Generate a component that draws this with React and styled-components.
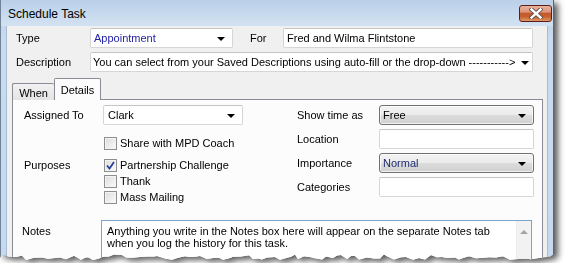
import React from 'react';
import styled, { createGlobalStyle } from 'styled-components';

const GlobalStyle = createGlobalStyle`
  html, body {
    margin: 0;
    padding: 0;
    background: #ffffff;
  }
  body {
    font-family: "Liberation Sans", Arial, sans-serif;
    font-size: 11px;
    color: #000;
  }
`;

// jagged bottom edge of the torn screenshot
const tornEdge = (() => {
  let seed = 7;
  const rnd = () => {
    seed = (seed * 16807) % 2147483647;
    return seed / 2147483647;
  };
  const pts = [];
  let x = 554;
  while (x > 0) {
    const y = 256 + rnd() * 4 + (rnd() > 0.8 ? -2 : 0);
    pts.push(`${x.toFixed(0)}px ${y.toFixed(1)}px`);
    x -= 3 + rnd() * 5;
  }
  pts.push(`0px 258px`);
  return `polygon(0 0, 554px 0, ${pts.join(', ')})`;
})();

const Shadow = styled.div`
  width: 554px;
  filter: drop-shadow(4px 3px 3px rgba(0, 0, 0, 0.65));
`;

const Window = styled.div`
  box-sizing: border-box;
  width: 554px;
  height: 263px;
  display: flex;
  flex-direction: column;
  padding: 0 5px;
  background: linear-gradient(#b9cfe8, #c9dbef 40px, #c7d9ee);
  border-left: 1px solid #6f8298;
  border-right: 1px solid #53667d;
  clip-path: ${tornEdge};
`;

const TitleBar = styled.div`
  flex: none;
  height: 26px;
  display: flex;
  align-items: flex-start;
  justify-content: space-between;
  font-size: 12px;
  background: linear-gradient(#bad0e9, #d3e2f2);
  margin: 0 -5px;
  padding: 0 0 0 7px;
`;

const Title = styled.span`
  padding-top: 7px;
`;

const CloseButton = styled.div`
  box-sizing: border-box;
  width: 33px;
  height: 17px;
  margin: 5px 1px 0 0;
  border: 1px solid #5e1c1c;
  border-radius: 3px;
  display: flex;
  align-items: center;
  justify-content: center;
  background: linear-gradient(
    #eab19a 0%,
    #dd957a 40%,
    #c4582e 50%,
    #c65f30 70%,
    #de9a66 100%
  );
`;

const Client = styled.div`
  flex: 1;
  min-height: 0;
  overflow: hidden;
  background: #f0f0f0;
  border-left: 1px solid #a9bcd2;
  border-right: 1px solid #a9bcd2;
  padding-top: 2px;
  display: flex;
  flex-direction: column;
`;

const TopRow = styled.div`
  flex: none;
  display: flex;
  align-items: center;
  height: 20px;
  padding-left: 9px;
  margin-bottom: ${(p) => p.gap || 0}px;
`;

const Label = styled.div`
  width: ${(p) => p.width}px;
  flex: none;
  padding-left: ${(p) => p.indent || 0}px;
  box-sizing: border-box;
`;

const Field = styled.div`
  box-sizing: border-box;
  width: ${(p) => p.width}px;
  height: 20px;
  flex: none;
  display: flex;
  align-items: center;
  justify-content: space-between;
  padding: 0 7px 0 ${(p) => p.pad || 3}px;
  background: #ffffff;
  border: 1px solid #d6d6d6;
  border-top-color: #c4c4c4;
  border-radius: 2px;
  color: ${(p) => p.color || '#000'};
  white-space: nowrap;
`;

const Combo = styled(Field)`
  border: 1px solid #707070;
  border-radius: 3px;
  background: linear-gradient(#f3f3f3 0%, #ebebeb 50%, #dddddd 51%, #cfcfcf 100%);
  box-shadow: inset 0 0 0 1px rgba(255, 255, 255, 0.7);
`;

const Arrow = styled.span`
  flex: none;
  width: 0;
  height: 0;
  margin-left: 6px;
  border-left: 4px solid transparent;
  border-right: 4px solid transparent;
  border-top: 4px solid #000;
  margin-top: 1px;
`;

const TabStrip = styled.div`
  flex: none;
  display: flex;
  align-items: flex-end;
  margin: 6px 0 0 5px;
  position: relative;
  z-index: 1;
  margin-bottom: -1px;
`;

const Tab = styled.div`
  box-sizing: border-box;
  width: ${(p) => (p.active ? 47 : 42)}px;
  height: ${(p) => (p.active ? 22 : 17)}px;
  display: flex;
  align-items: center;
  justify-content: center;
  padding-top: ${(p) => (p.active ? 0 : 2)}px;
  border: 1px solid #898c95;
  border-bottom: none;
  border-right: ${(p) => (p.active ? '1px solid #898c95' : 'none')};
  border-radius: 2px 2px 0 0;
  background: ${(p) =>
    p.active ? '#fcfcfc' : 'linear-gradient(#f2f2f2, #e4e4e4)'};
`;

const Panel = styled.div`
  flex: 1;
  min-height: 0;
  margin: 0 4px 0 5px;
  border: 1px solid #898c95;
  background: #fcfcfc;
  padding: 5px 8px 0 11px;
`;

const Columns = styled.div`
  display: flex;
  justify-content: space-between;
`;

const LeftCol = styled.div`
  width: 219px;
  display: flex;
  flex-direction: column;
`;

const RightCol = styled.div`
  width: 237px;
  display: grid;
  grid-template-columns: 82px 155px;
  grid-auto-rows: 20px;
  row-gap: 4px;
  align-items: center;
`;

const FormRow = styled.div`
  display: flex;
  align-items: ${(p) => p.align || 'center'};
  margin-top: ${(p) => p.top || 0}px;
`;

const CheckList = styled.div`
  display: flex;
  flex-direction: column;
`;

const CheckRow = styled.div`
  height: 16px;
  display: flex;
  align-items: center;
  gap: 3px;
  margin-left: 1px;
`;

const Box = styled.span`
  box-sizing: border-box;
  width: 13px;
  height: 13px;
  border: 1px solid #8e8f8f;
  background: linear-gradient(135deg, #dcdcdc, #fbfbfb);
  box-shadow: inset 0 0 0 1px #f4f4f4;
  display: flex;
  align-items: center;
  justify-content: center;
`;

const NotesRow = styled.div`
  display: flex;
  align-items: flex-start;
  margin-top: 15px;
  margin-left: -2px;
`;

const NotesLabel = styled.div`
  width: 79px;
  padding-top: 5px;
`;

const NotesBox = styled.div`
  box-sizing: border-box;
  width: 431px;
  height: 60px;
  display: flex;
  background: #ffffff;
  border: 1px solid #7da2ce;
`;

const NotesText = styled.div`
  flex: 1;
  padding: 4px 5px;
  line-height: 12px;
`;

const ScrollBar = styled.div`
  width: 15px;
  background: #f2f2f2;
  border-left: 1px solid #ececec;
  display: flex;
  justify-content: center;
  padding-top: 9px;
  box-sizing: border-box;
`;

const UpArrow = styled.span`
  width: 0;
  height: 0;
  border-left: 4px solid transparent;
  border-right: 4px solid transparent;
  border-bottom: 4px solid #a4a4a4;
`;

const CloseGlyph = () => (
  <svg width="14" height="11" viewBox="0 0 14 11">
    <path d="M2.5 1.5 L11.5 9.5 M11.5 1.5 L2.5 9.5" stroke="#5a4a44" strokeWidth="4.2" strokeLinecap="square" />
    <path d="M2.5 1.5 L11.5 9.5 M11.5 1.5 L2.5 9.5" stroke="#ffffff" strokeWidth="2.4" strokeLinecap="square" />
  </svg>
);

const Check = () => (
  <svg width="9" height="9" viewBox="0 0 9 9">
    <path d="M1 4.5 L3.5 7.5 L8 1" fill="none" stroke="#2b3f9a" strokeWidth="1.8" />
  </svg>
);

const CheckItem = ({ checked, children }) => (
  <CheckRow>
    <Box>{checked && <Check />}</Box>
    {children}
  </CheckRow>
);

export default function App() {
  return (
    <>
      <GlobalStyle />
      <Shadow>
        <Window>
          <TitleBar>
            <Title>Schedule Task</Title>
            <CloseButton>
              <CloseGlyph />
            </CloseButton>
          </TitleBar>
          <Client>
            <TopRow gap={4}>
              <Label width={74}>Type</Label>
              <Field width={143} color="#2323a8">
                Appointment
                <Arrow />
              </Field>
              <Label width={50} indent={17}>For</Label>
              <Field width={250}>Fred and Wilma Flintstone</Field>
            </TopRow>
            <TopRow>
              <Label width={74}>Description</Label>
              <Field width={443} pad={2}>
                You can select from your Saved Descriptions using auto-fill or the drop-down -----------&gt;
                <Arrow />
              </Field>
            </TopRow>
            <TabStrip>
              <Tab>When</Tab>
              <Tab active>Details</Tab>
            </TabStrip>
            <Panel>
              <Columns>
                <LeftCol>
                  <FormRow>
                    <Label width={79}>Assigned To</Label>
                    <Field width={140} pad={4}>
                      Clark
                      <Arrow />
                    </Field>
                  </FormRow>
                  <FormRow top={10}>
                    <Label width={79} />
                    <CheckItem>Share with MPD Coach</CheckItem>
                  </FormRow>
                  <FormRow top={6} align="flex-start">
                    <Label width={79} style={{ lineHeight: '16px' }}>Purposes</Label>
                    <CheckList>
                      <CheckItem checked>Partnership Challenge</CheckItem>
                      <CheckItem>Thank</CheckItem>
                      <CheckItem>Mass Mailing</CheckItem>
                    </CheckList>
                  </FormRow>
                </LeftCol>
                <RightCol>
                  <span>Show time as</span>
                  <Combo width={155}>
                    Free
                    <Arrow />
                  </Combo>
                  <span>Location</span>
                  <Field width={155} />
                  <span>Importance</span>
                  <Combo width={155} color="#1c2b70">
                    Normal
                    <Arrow />
                  </Combo>
                  <span>Categories</span>
                  <Field width={155} />
                </RightCol>
              </Columns>
              <NotesRow>
                <NotesLabel>Notes</NotesLabel>
                <NotesBox>
                  <NotesText>
                    Anything you write in the Notes box here will appear on the separate Notes tab
                    <br />
                    when you log the history for this task.
                  </NotesText>
                  <ScrollBar>
                    <UpArrow />
                  </ScrollBar>
                </NotesBox>
              </NotesRow>
            </Panel>
          </Client>
        </Window>
      </Shadow>
    </>
  );
}
